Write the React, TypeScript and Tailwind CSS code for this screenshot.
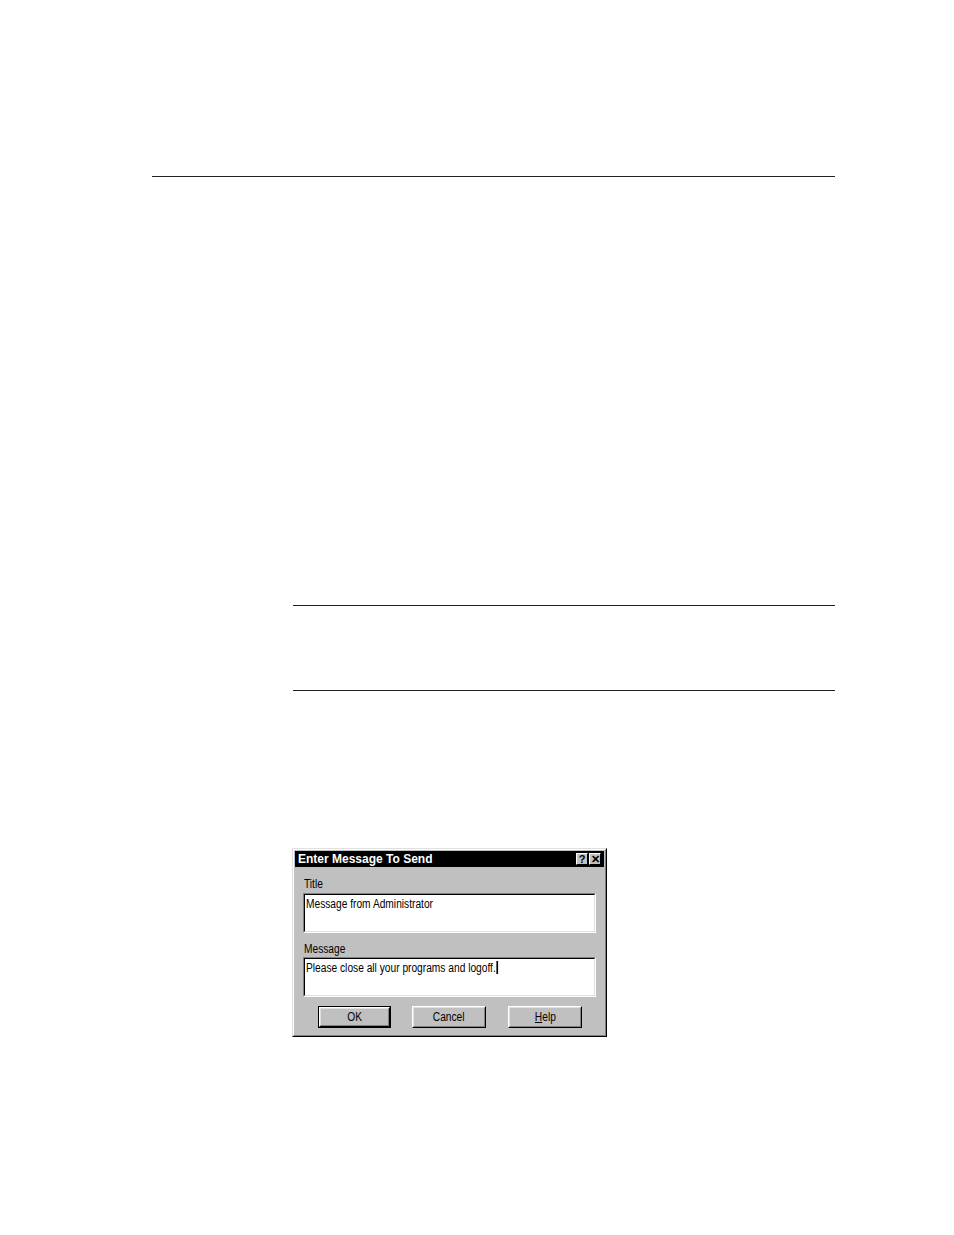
import React from "react";

const ui = "font-['Liberation_Sans',Arial,sans-serif]";
const narrow = "inline-block scale-x-[0.85] origin-left whitespace-nowrap";

function CapBtn({ children }: { children: React.ReactNode }) {
  return (
    <div className="w-[12px] h-[12px] bg-[#c0c0c0] border border-t-white border-l-white border-r-black border-b-black flex items-center justify-center text-black text-[11px] font-bold leading-none font-['Liberation_Sans',Arial,sans-serif]">
      {children}
    </div>
  );
}

function Btn({ children, def }: { children: React.ReactNode; def?: boolean }) {
  return (
    <div className={def ? "border border-black" : ""}>
      <div className={`${def ? "w-[71px] h-[20px]" : "w-[74px] h-[22px]"} bg-[#c0c0c0] border border-t-white border-l-white border-r-black border-b-black`}>
        <div className="w-full h-full border border-t-[#dfdfdf] border-l-[#dfdfdf] border-r-[#808080] border-b-[#808080] flex items-center justify-center text-[12px] text-black leading-none">
          <span className="inline-block scale-x-[0.85] whitespace-nowrap">{children}</span>
        </div>
      </div>
    </div>
  );
}

function Field({ text, cursor }: { text: string; cursor?: boolean }) {
  return (
    <div className="w-[293px] h-[40px] border border-t-[#808080] border-l-[#808080] border-r-white border-b-white">
      <div className="w-full h-full border border-t-black border-l-black border-r-[#dfdfdf] border-b-[#dfdfdf] bg-white px-[1px] pt-[2px]">
        <div className="text-[12px] leading-[14px] text-black whitespace-nowrap">
          <span className={narrow}>
            {text}
            {cursor && <span className="inline-block w-[2px] h-[13px] bg-black ml-[1px] align-[-2px]" />}
          </span>
        </div>
      </div>
    </div>
  );
}

export default function App() {
  return (
    <div className="w-[954px] h-[1235px] bg-white relative overflow-hidden">
      <div className="pt-[176px]">
        <div className="ml-[152px] w-[683px] h-[1px] bg-[#222]" />
        <div className="mt-[428px] ml-[293px] w-[542px] h-[1px] bg-[#222]" />
        <div className="mt-[84px] ml-[293px] w-[542px] h-[1px] bg-[#222]" />
        <div className={`mt-[157px] ml-[292px] w-[315px] h-[189px] border border-t-[#dfdfdf] border-l-[#dfdfdf] border-r-black border-b-black ${ui}`}>
          <div className="w-full h-full bg-[#c0c0c0] border border-t-white border-l-white border-r-[#808080] border-b-[#808080] p-[1px] flex flex-col">
            <div className="h-[16px] bg-black flex items-center justify-between pl-[3px] pr-[3px]">
              <span className="text-white text-[12px] font-bold leading-none font-['Liberation_Sans',Arial,sans-serif]">Enter Message To Send</span>
              <div className="flex gap-[1px]">
                <CapBtn>?</CapBtn>
                <CapBtn>✕</CapBtn>
              </div>
            </div>
            <div className="pl-[8px] pt-[10px]">
              <div className="text-[12px] leading-[14px] text-black ml-[1px]">
                <span className={narrow}>Title</span>
              </div>
              <div className="mt-[2px]">
                <Field text="Message from Administrator" />
              </div>
              <div className="mt-[9px] text-[12px] leading-[14px] text-black ml-[1px]">
                <span className={narrow}>Message</span>
              </div>
              <div className="mt-[1px]">
                <Field text="Please close all your programs and logoff." cursor />
              </div>
              <div className="mt-[9px] flex pl-[15px]">
                <Btn def>OK</Btn>
                <div className="w-[21px]" />
                <Btn>Cancel</Btn>
                <div className="w-[22px]" />
                <Btn>
                  <span className="underline">H</span>elp
                </Btn>
              </div>
            </div>
          </div>
        </div>
      </div>
    </div>
  );
}
